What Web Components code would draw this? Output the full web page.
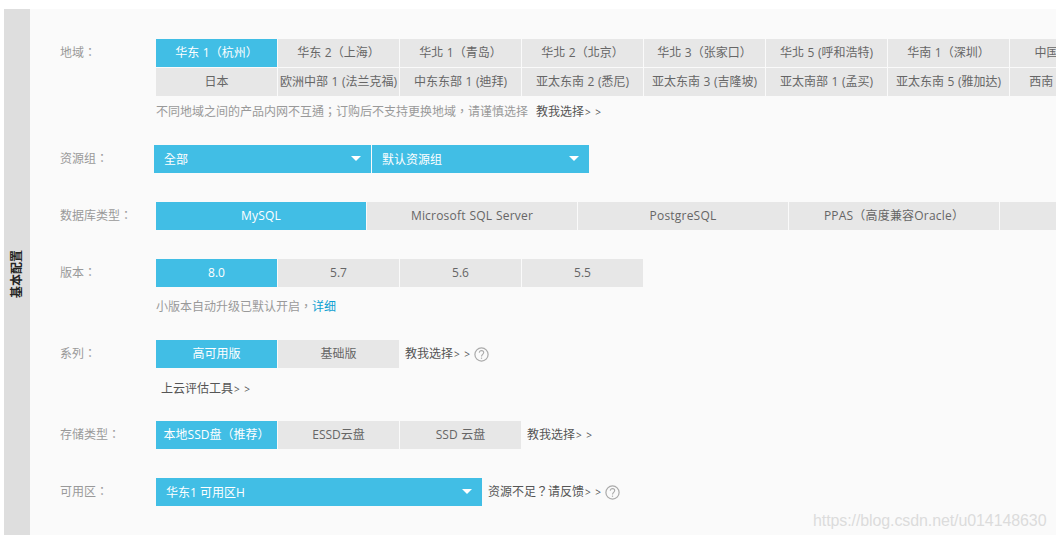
<!DOCTYPE html>
<html>
<head>
<meta charset="utf-8">
<title>基本配置</title>
<style>
    html, body {
        margin: 0;
        background-color: #fff;
        overflow: hidden;
    }
    body {
        padding: 9px 0 0 4px;
        font: 12px/18px "Open Sans", "Noto Sans CJK TC", sans-serif;
        text-spacing-trim: space-all;
        color: #666;
    }
</style>
</head>
<body>
<app-config-panel title-text="基本配置">
    <app-config-row label="地域：">
        <app-option-group cols="8">
            <app-option active>华东 1（杭州）</app-option>
            <app-option>华东 2（上海）</app-option>
            <app-option>华北 1（青岛）</app-option>
            <app-option>华北 2（北京）</app-option>
            <app-option>华北 3（张家口）</app-option>
            <app-option>华北 5 (呼和浩特)</app-option>
            <app-option>华南 1（深圳）</app-option>
            <app-option>中国（香港）</app-option>
            <app-option>日本</app-option>
            <app-option>欧洲中部 1 (法兰克福)</app-option>
            <app-option>中东东部 1 (迪拜)</app-option>
            <app-option>亚太东南 2 (悉尼)</app-option>
            <app-option>亚太东南 3 (吉隆坡)</app-option>
            <app-option>亚太南部 1 (孟买)</app-option>
            <app-option>亚太东南 5 (雅加达)</app-option>
            <app-option>西南 1（成都）</app-option>
        </app-option-group>
        <app-hint slot="below" style="--top: 7px; --bottom: -5px">不同地域之间的产品内网不互通；订购后不支持更换地域，请谨慎选择<app-more style="margin-left: 8px">教我选择</app-more></app-hint>
    </app-config-row>

    <app-config-row label="资源组：">
        <div style="display: flex; gap: 1px; margin-left: -2px">
            <app-select style="width: 217px">全部</app-select>
            <app-select style="width: 217px">默认资源组</app-select>
        </div>
    </app-config-row>

    <app-config-row label="数据库类型：">
        <app-option-group cols="5" cell="210px">
            <app-option active latin>MySQL</app-option>
            <app-option latin>Microsoft SQL Server</app-option>
            <app-option latin>PostgreSQL</app-option>
            <app-option latin>PPAS（高度兼容Oracle）</app-option>
            <app-option></app-option>
        </app-option-group>
    </app-config-row>

    <app-config-row label="版本：">
        <app-option-group cols="4">
            <app-option active>8.0</app-option>
            <app-option>5.7</app-option>
            <app-option>5.6</app-option>
            <app-option>5.5</app-option>
        </app-option-group>
        <app-hint slot="below" style="--top: 11px; --bottom: -5px">小版本自动升级已默认开启，<a-blue>详细</a-blue></app-hint>
    </app-config-row>

    <app-config-row label="系列：">
        <app-option-group cols="2">
            <app-option active>高可用版</app-option>
            <app-option>基础版</app-option>
        </app-option-group>
        <app-more slot="aside">教我选择</app-more>
        <app-help slot="aside"></app-help>
        <app-hint slot="below" style="--top: 12px; --bottom: -6px; --left: 5px"><app-more>上云评估工具</app-more></app-hint>
    </app-config-row>

    <app-config-row label="存储类型：">
        <app-option-group cols="3">
            <app-option active>本地SSD盘（推荐）</app-option>
            <app-option>ESSD云盘</app-option>
            <app-option>SSD 云盘</app-option>
        </app-option-group>
        <app-more slot="aside">教我选择</app-more>
    </app-config-row>

    <app-config-row label="可用区：">
        <app-select style="width: 326px">华东1 可用区H</app-select>
        <app-more slot="aside">资源不足？请反馈</app-more>
        <app-help slot="aside"></app-help>
    </app-config-row>
</app-config-panel>
<app-watermark>https://blog.csdn.net/u014148630</app-watermark>

<script>
class AppConfigPanel extends HTMLElement {
    constructor() {
        super();
        this.attachShadow({mode: 'open'});
        this.shadowRoot.innerHTML = `
            <style>
                :host {
                    display: flex;
                    background-color: #fafafa;
                }
                .side {
                    flex: none;
                    width: 26px;
                    background-color: #dedede;
                    display: flex;
                    justify-content: center;
                    padding-top: 241px;
                    box-sizing: border-box;
                }
                .side span {
                    writing-mode: vertical-rl;
                    text-orientation: sideways;
                    transform: rotate(180deg);
                    height: 48px;
                    font-weight: 700;
                    color: #222;
                }
                .body {
                    flex: 1;
                    min-width: 0;
                    overflow: hidden;
                    padding: 30px 0 29px 30px;
                    display: flex;
                    flex-direction: column;
                    gap: 29px;
                }
            </style>
            <div class="side"><span></span></div>
            <div class="body"><slot></slot></div>
        `;
        this.shadowRoot.querySelector('span').textContent = this.getAttribute('title-text');
    }
}

class AppConfigRow extends HTMLElement {
    constructor() {
        super();
        this.attachShadow({mode: 'open'});
        this.shadowRoot.innerHTML = `
            <style>
                :host {
                    display: grid;
                    grid-template-columns: 96px 1fr;
                }
                .label {
                    height: 28px;
                    line-height: 27px;
                    color: #999;
                }
                .line {
                    display: flex;
                    align-items: center;
                    min-width: 0;
                }
                .aside {
                    display: flex;
                    align-items: center;
                    gap: 3px;
                    margin-left: 6px;
                    flex: none;
                }
                .below {
                    grid-column: 2;
                }
            </style>
            <div class="label"></div>
            <div class="line"><slot></slot><div class="aside"><slot name="aside"></slot></div></div>
            <div class="below"><slot name="below"></slot></div>
        `;
        this.shadowRoot.querySelector('.label').textContent = this.getAttribute('label');
    }
}

class AppOptionGroup extends HTMLElement {
    constructor() {
        super();
        this.attachShadow({mode: 'open'});
        const cell = this.getAttribute('cell') || '121px';
        this.shadowRoot.innerHTML = `
            <style>
                :host {
                    display: grid;
                    flex: none;
                    grid-template-columns: repeat(${this.getAttribute('cols')}, ${cell});
                    gap: 1px;
                }
            </style>
            <slot></slot>
        `;
    }
}

class AppOption extends HTMLElement {
    constructor() {
        super();
        this.attachShadow({mode: 'open'});
        this.shadowRoot.innerHTML = `
            <style>
                :host {
                    display: block;
                    height: 28px;
                    line-height: 27px;
                    text-align: center;
                    white-space: nowrap;
                    overflow: hidden;
                    word-spacing: 0.5px;
                    background-color: #e7e7e7;
                    color: #666;
                }
                :host([latin]) {
                    letter-spacing: 0.2px;
                }
                :host([active]) {
                    background-color: #41bee5;
                    color: #fff;
                }
            </style>
            <slot></slot>
        `;
    }
}

class AppSelect extends HTMLElement {
    constructor() {
        super();
        this.attachShadow({mode: 'open'});
        this.shadowRoot.innerHTML = `
            <style>
                :host {
                    display: flex;
                    flex: none;
                    align-items: center;
                    justify-content: space-between;
                    box-sizing: border-box;
                    height: 28px;
                    padding: 0 10px;
                    background-color: #41bee5;
                    color: #fff;
                    line-height: 27px;
                }
                i {
                    width: 0;
                    height: 0;
                    border-left: 5px solid transparent;
                    border-right: 5px solid transparent;
                    border-top: 5px solid #fff;
                    margin-top: -1px;
                }
            </style>
            <span><slot></slot></span><i></i>
        `;
    }
}

class AppHint extends HTMLElement {
    constructor() {
        super();
        this.attachShadow({mode: 'open'});
        this.shadowRoot.innerHTML = `
            <style>
                :host {
                    display: flex;
                    height: 18px;
                    margin: var(--top, 0) 0 var(--bottom, 0) var(--left, 0);
                    color: #999;
                    white-space: nowrap;
                }
            </style>
            <slot></slot>
        `;
    }
}

class AppMore extends HTMLElement {
    constructor() {
        super();
        this.attachShadow({mode: 'open'});
        this.shadowRoot.innerHTML = `
            <style>
                :host {
                    display: inline-block;
                    color: #555;
                    white-space: nowrap;
                }
                small {
                    font-size: 10px;
                    letter-spacing: 1px;
                    margin-left: 1px;
                }
            </style>
            <slot></slot><small>&gt; &gt;</small>
        `;
    }
}

class ABlue extends HTMLElement {
    constructor() {
        super();
        this.attachShadow({mode: 'open'});
        this.shadowRoot.innerHTML = `
            <style>
                :host {
                    color: #0e9fd1;
                }
            </style>
            <slot></slot>
        `;
    }
}

class AppHelp extends HTMLElement {
    constructor() {
        super();
        this.attachShadow({mode: 'open'});
        this.shadowRoot.innerHTML = `
            <style>
                :host {
                    display: block;
                    width: 15px;
                    height: 15px;
                }
                svg {
                    display: block;
                }
            </style>
            <svg width="15" height="15" viewBox="0 0 15 15" fill="none" stroke="#aaa">
                <circle cx="7.5" cy="7.5" r="6.6" stroke-width="1.2"></circle>
                <path d="M5.3 5.8c0-1.4 1-2.2 2.2-2.2s2.2.8 2.2 2c0 1.7-2.2 1.9-2.2 3.9" stroke-width="1.1"></path>
                <path d="M7.5 10.6v1.2" stroke-width="1.2"></path>
            </svg>
        `;
    }
}

class AppWatermark extends HTMLElement {
    constructor() {
        super();
        this.attachShadow({mode: 'open'});
        this.shadowRoot.innerHTML = `
            <style>
                :host {
                    position: absolute;
                    left: 813px;
                    top: 511px;
                    font: 16px/20px "Liberation Sans", sans-serif;
                    letter-spacing: -0.1px;
                    color: #dcdcdc;
                    white-space: nowrap;
                }
            </style>
            <slot></slot>
        `;
    }
}

window.customElements.define('app-config-panel', AppConfigPanel);
window.customElements.define('app-config-row', AppConfigRow);
window.customElements.define('app-option-group', AppOptionGroup);
window.customElements.define('app-option', AppOption);
window.customElements.define('app-select', AppSelect);
window.customElements.define('app-hint', AppHint);
window.customElements.define('app-more', AppMore);
window.customElements.define('a-blue', ABlue);
window.customElements.define('app-help', AppHelp);
window.customElements.define('app-watermark', AppWatermark);
</script>
</body>
</html>
